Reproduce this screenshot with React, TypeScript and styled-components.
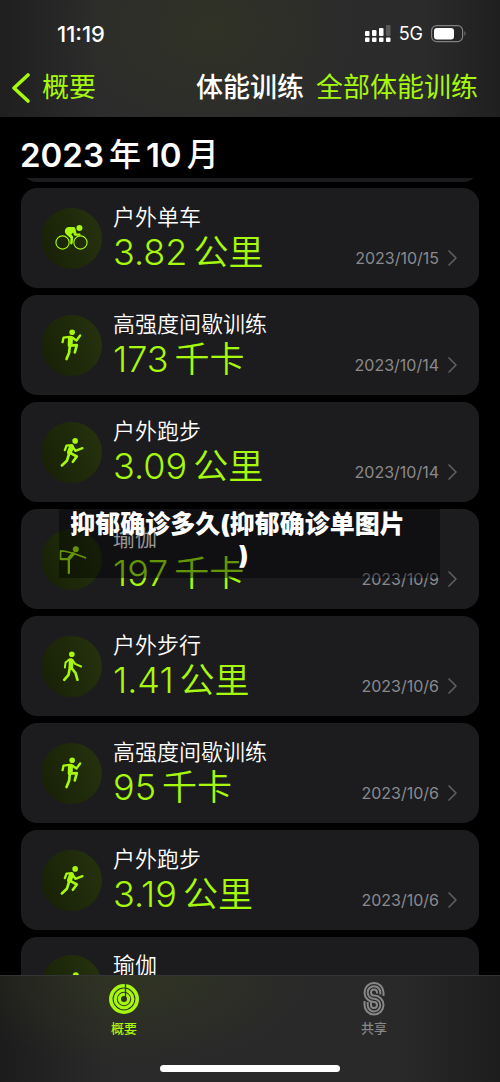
import React from "react";
import styled, { createGlobalStyle } from "styled-components";

const GREEN = "#a6f80c";
const FONT = 'Inter, "Noto Sans CJK SC", sans-serif';

const GlobalStyle = createGlobalStyle`
  *, *::before, *::after { box-sizing: border-box; }
  body { margin: 0; background: #000; color: #fff; font-family: ${FONT}; }
  button { font: inherit; border: 0; padding: 0; background: none; cursor: pointer; }
  a { color: inherit; text-decoration: none; }
  h1, h2, h3, p, ul { margin: 0; padding: 0; }
`;

const Screen = styled.div`
  position: relative;
  display: flex;
  flex-direction: column;
  height: 100vh;
  overflow: hidden;
`;

const Header = styled.header`
  flex: none;
  height: 117px;
  background:
    radial-gradient(ellipse 150px 110px at 42% 25%, rgba(50, 54, 32, 0.6), transparent),
    linear-gradient(90deg, #1f1f1f 0%, #2c2c2c 20%, #2b2b2c 85%, #1f1f1f 100%);
`;

const StatusBar = styled.div`
  display: flex;
  align-items: center;
  height: 60px;
  padding: 8px 33px 0 57px;
`;

const Clock = styled.time`
  flex: 1;
  font-size: 22px;
  font-weight: 500;
`;

const StatusIcons = styled.div`
  display: flex;
  align-items: center;
  gap: 8px;
  font-size: 18px;
  line-height: 20px;
`;

const NavBar = styled.nav`
  display: grid;
  grid-template-columns: 1fr auto 1fr;
  align-items: center;
  height: 56px;
  font-size: 27px;
  line-height: 40px;
`;

const BackButton = styled.button`
  display: flex;
  align-items: center;
  gap: 12px;
  padding-left: 11px;
  color: ${GREEN};
`;

const NavTitle = styled.h1`
  font-size: 27px;
  font-weight: 500;
`;

const AllLink = styled.a`
  justify-self: end;
  padding-right: 22px;
  color: ${GREEN};
  white-space: nowrap;
`;

const Month = styled.h2`
  display: flex;
  align-items: center;
  flex: none;
  gap: 5px;
  height: 61px;
  padding: 15px 20px 0;
  font-size: 33px;
  font-weight: 600;
  line-height: 40px;
`;

const MonthUnit = styled.span`
  font-size: 32px;
  font-weight: 500;
`;

const Scroller = styled.main`
  flex: 1;
  min-height: 0;
  padding: 0 21px;
  overflow: hidden;
`;

const PreviousCard = styled.div`
  height: 32px;
  margin: -28px 0 6px;
  border-radius: 16px;
  background: #1c1c1e;
`;

const List = styled.ul`
  display: flex;
  flex-direction: column;
  gap: 7px;
  list-style: none;
`;

const Card = styled.a`
  display: flex;
  align-items: center;
  gap: 11px;
  height: 100px;
  padding: 0 21px 0 20px;
  border-radius: 16px;
  background: #1c1c1e;
`;

const Badge = styled.span`
  flex: none;
  display: block;
  width: 61px;
  height: 61px;
  border-radius: 50%;
  background: linear-gradient(70deg, #171f05, #26330f);
  color: ${GREEN};
`;

const Info = styled.div`
  flex: 1;
  min-width: 0;
`;

const Name = styled.h3`
  font-size: 22px;
  font-weight: 350;
  line-height: 28px;
`;

const Value = styled.p`
  display: flex;
  align-items: baseline;
  gap: 6px;
  color: ${GREEN};
  font-size: 36px;
  font-weight: 350;
  line-height: 42px;
`;

const Unit = styled.span`
  font-size: 35px;
`;

const DateMark = styled.div`
  display: flex;
  align-items: center;
  align-self: flex-end;
  gap: 8px;
  padding-bottom: 20px;
  color: #8a8a8e;
  font-size: 16px;
  line-height: 20px;
`;

const Banner = styled.p`
  position: absolute;
  top: 509px;
  left: 59px;
  right: 60px;
  padding: 0 24px 7px 0;
  background: rgba(0, 0, 0, 0.4);
  font-size: 25px;
  font-weight: 900;
  line-height: 31px;
  text-align: center;
`;

const BannerTail = styled.span`
  padding-left: 12px;
`;

const TabBar = styled.nav`
  flex: none;
  height: 107px;
  border-top: 1px solid #343434;
  background:
    radial-gradient(ellipse 180px 90px at 27% 0, rgba(50, 56, 30, 0.7), transparent),
    linear-gradient(90deg, #1c1c1c 0%, #2a2a2a 22%, #29292a 80%, #1d1d1d 100%);
`;

const Tabs = styled.div`
  display: grid;
  grid-template-columns: 1fr 1fr;
  height: 89px;
`;

const Tab = styled.button<{ $active?: boolean }>`
  display: flex;
  flex-direction: column;
  align-items: center;
  gap: 3px;
  padding: 6px 2px 0 0;
  color: ${(p) => (p.$active ? GREEN : "#878787")};
`;

const TabLabel = styled.span`
  font-size: 13px;
  font-weight: 500;
  line-height: 18px;
`;

const HomeIndicator = styled.div`
  width: 36%;
  height: 7px;
  margin: 0 auto;
  border-radius: 4px;
  background: #fff;
`;

type Kind = "bike" | "hiit" | "run" | "yoga" | "walk";

const figures: Record<Kind, React.ReactNode> = {
  bike: (
    <>
      <circle cx="65" cy="104" r="20" strokeWidth="3.5" />
      <circle cx="119" cy="104" r="20" strokeWidth="3.5" />
      <circle cx="116" cy="60" r="9" fill="currentColor" stroke="none" />
      <path
        d="M72 69 Q74 57 84 57 L98 57 Q103 57 104 63 L107 77 H118 Q121 80 118 84 H103 Q100 84 99 81 L97 74 L91 80 L95 84 Q98 87 97 92 L95 108 Q91 112 88 108 L89 91 L76 79 Q71 75 72 69 Z"
        fill="currentColor"
        stroke="none"
      />
    </>
  ),
  hiit: (
    <>
      <circle cx="94" cy="52" r="8.5" fill="currentColor" stroke="none" />
      <path d="M89 70 L88 90" strokeWidth="15" />
      <path d="M86 66 L68 68 L65 82 M94 68 L107 77 L118 62" />
      <path d="M89 92 L108 91 L102 113 M87 92 L85 113 L77 133" strokeWidth="8" />
    </>
  ),
  run: (
    <>
      <circle cx="103" cy="57" r="8.5" fill="currentColor" stroke="none" />
      <path d="M92 75 L86 91" strokeWidth="15" />
      <path d="M93 70 L77 71 L72 85 M95 74 L104 87 L125 79" />
      <path d="M88 93 L108 104 L96 120 M85 95 L78 117 L63 131" strokeWidth="8" />
    </>
  ),
  yoga: (
    <>
      <circle cx="105" cy="61" r="9" fill="currentColor" stroke="none" />
      <path d="M59 90 V66 L72 67 L97 73 L134 87" strokeWidth="5" />
      <path d="M60 91 L84 91 V133" strokeWidth="7" />
      <path d="M85 88 L97 75" strokeWidth="11" />
    </>
  ),
  walk: (
    <>
      <circle cx="93" cy="55" r="8.5" fill="currentColor" stroke="none" />
      <path d="M91 74 L90 94" strokeWidth="14" />
      <path d="M86 70 L74 80 L72 95 M95 73 L103 84 L121 92" strokeWidth="6" />
      <path d="M87 96 L83 117 L70 132 M92 97 L104 111 L110 132" strokeWidth="8" />
    </>
  ),
};

const Figure = ({ kind }: { kind: Kind }) => (
  <svg
    viewBox="0 0 184 184"
    width="61"
    height="61"
    fill="none"
    stroke="currentColor"
    strokeWidth="7"
    strokeLinecap="round"
    strokeLinejoin="round"
    aria-hidden="true"
  >
    {figures[kind]}
  </svg>
);

const SignalIcon = () => (
  <svg width="26" height="18" viewBox="0 0 26 18" fill="#fff" aria-hidden="true">
    <rect x="0" y="6" width="4.500" height="5" rx="1" />
    <rect x="7" y="5" width="4.500" height="6" rx="1" />
    <rect x="14" y="3" width="4.500" height="8" rx="1" />
    <rect x="21" y="0" width="4.500" height="11" rx="1" fill="#5a5a5a" />
    <rect x="0" y="12.500" width="4.500" height="4.500" rx="1" />
    <rect x="7" y="12.500" width="4.500" height="4.500" rx="1" />
    <rect x="14" y="12.500" width="4.500" height="4.500" rx="1" />
    <rect x="21" y="12.500" width="4.500" height="4.500" rx="1" />
  </svg>
);

const BatteryIcon = () => (
  <svg width="36" height="18" viewBox="0 0 36 18" aria-hidden="true">
    <rect x="0.6" y="0.6" width="31" height="16" rx="5" fill="none" stroke="#808080" strokeWidth="1.2" />
    <rect x="3" y="3" width="20" height="11.500" rx="3" fill="#fff" />
    <path d="M33.500 6 Q35.500 8.500 33.500 11 Z" fill="#808080" />
  </svg>
);

const BackIcon = () => (
  <svg width="19" height="30" viewBox="0 0 19 30" fill="none" stroke="currentColor" strokeWidth="3.600" strokeLinecap="round" strokeLinejoin="round" aria-hidden="true">
    <path d="M17 2 L3 15 L17 28" />
  </svg>
);

const ChevronIcon = () => (
  <svg width="11" height="18" viewBox="0 0 11 18" fill="none" stroke="#5c5c60" strokeWidth="1.700" strokeLinecap="round" strokeLinejoin="round" aria-hidden="true">
    <path d="M2 2 L9 9 L2 16" />
  </svg>
);

const RingsIcon = () => (
  <svg width="32" height="34" viewBox="0 0 32 34" fill="none" stroke="currentColor" aria-hidden="true">
    <circle cx="16" cy="17" r="13.200" strokeWidth="3.600" />
    <circle cx="16" cy="17" r="8.800" strokeWidth="3.200" />
    <circle cx="16" cy="17" r="4.600" strokeWidth="3.200" />
    <path d="M17.500 1.500 V15" stroke="#2b2f20" strokeWidth="1.300" />
  </svg>
);

const SharingIcon = () => (
  <svg width="32" height="34" viewBox="0 0 32 34" fill="none" stroke="currentColor" strokeWidth="2" aria-hidden="true">
    <path d="M25.500 14 V10.500 A9.500 9.500 0 1 0 16 20 A3 3 0 1 1 13 23 V20" />
    <path d="M22.300 12.500 V10.500 A6.300 6.300 0 1 0 16 16.800 A6.300 6.300 0 1 1 9.700 23 V20" />
    <path d="M19 11.500 V10.500 A3 3 0 1 0 16 13.500 A9.500 9.500 0 1 1 6.500 23 V19" />
  </svg>
);

interface Workout {
  kind: Kind;
  name: string;
  amount: string;
  unit: string;
  date: string;
}

const workouts: Workout[] = [
  { kind: "bike", name: "户外单车", amount: "3.82", unit: "公里", date: "2023/10/15" },
  { kind: "hiit", name: "高强度间歇训练", amount: "173", unit: "千卡", date: "2023/10/14" },
  { kind: "run", name: "户外跑步", amount: "3.09", unit: "公里", date: "2023/10/14" },
  { kind: "yoga", name: "瑜伽", amount: "197", unit: "千卡", date: "2023/10/9" },
  { kind: "walk", name: "户外步行", amount: "1.41", unit: "公里", date: "2023/10/6" },
  { kind: "hiit", name: "高强度间歇训练", amount: "95", unit: "千卡", date: "2023/10/6" },
  { kind: "run", name: "户外跑步", amount: "3.19", unit: "公里", date: "2023/10/6" },
];

const WorkoutCard = ({ workout }: { workout: Workout }) => (
  <Card href="#workout">
    <Badge>
      <Figure kind={workout.kind} />
    </Badge>
    <Info>
      <Name>{workout.name}</Name>
      <Value>
        <span>{workout.amount}</span>
        <Unit>{workout.unit}</Unit>
      </Value>
    </Info>
    <DateMark>
      <time>{workout.date}</time>
      <ChevronIcon />
    </DateMark>
  </Card>
);

const PartialCard = styled(Card)`
  align-items: flex-start;
  padding-top: 18px;
`;

const PartialInfo = styled(Info)`
  margin-top: -4px;
`;

export default function App() {
  return (
    <Screen>
      <GlobalStyle />
      <Header>
        <StatusBar>
          <Clock>11:19</Clock>
          <StatusIcons>
            <SignalIcon />
            <span>5G</span>
            <BatteryIcon />
          </StatusIcons>
        </StatusBar>
        <NavBar>
          <BackButton type="button">
            <BackIcon />
            概要
          </BackButton>
          <NavTitle>体能训练</NavTitle>
          <AllLink href="#all">全部体能训练</AllLink>
        </NavBar>
      </Header>
      <Month>
        <span>2023</span>
        <MonthUnit>年</MonthUnit>
        <span>10</span>
        <MonthUnit>月</MonthUnit>
      </Month>
      <Scroller>
        <PreviousCard />
        <List>
          {workouts.map((workout, index) => (
            <li key={index}>
              <WorkoutCard workout={workout} />
            </li>
          ))}
          <li>
            <PartialCard href="#workout">
              <Badge>
                <Figure kind="yoga" />
              </Badge>
              <PartialInfo>
                <Name>瑜伽</Name>
              </PartialInfo>
            </PartialCard>
          </li>
        </List>
      </Scroller>
      <Banner>
        抑郁确诊多久(抑郁确诊单图片
        <br />
        <BannerTail>)</BannerTail>
      </Banner>
      <TabBar>
        <Tabs>
          <Tab type="button" $active>
            <RingsIcon />
            <TabLabel>概要</TabLabel>
          </Tab>
          <Tab type="button">
            <SharingIcon />
            <TabLabel>共享</TabLabel>
          </Tab>
        </Tabs>
        <HomeIndicator />
      </TabBar>
    </Screen>
  );
}
